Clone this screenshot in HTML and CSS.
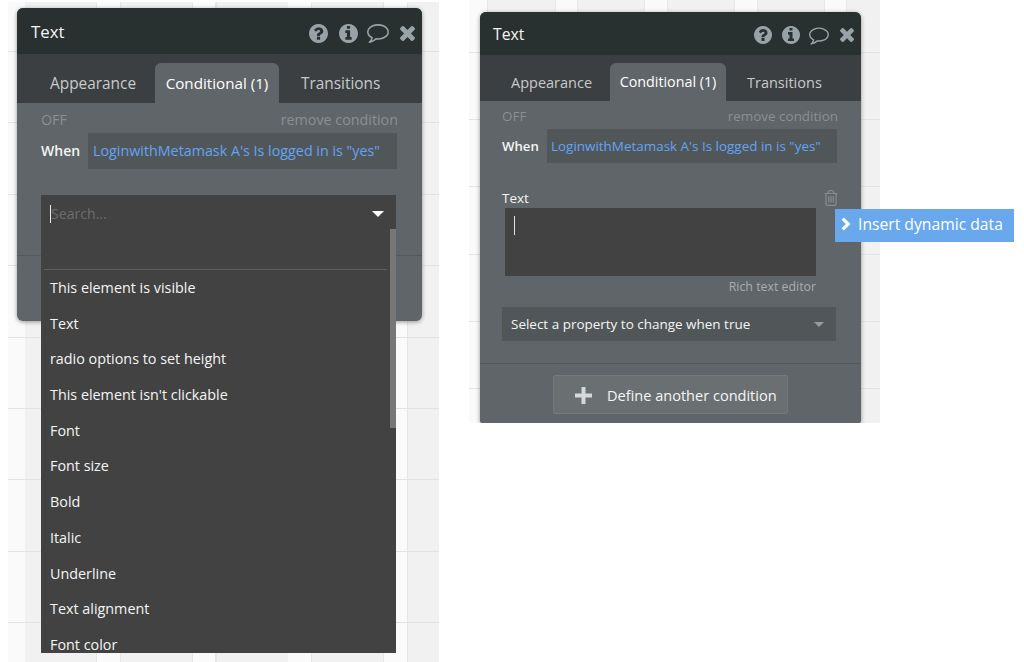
FILE: index.html
```html
<!DOCTYPE html>
<html lang="en">
<head>
<meta charset="utf-8">
<title>Text conditional properties</title>
<link rel="stylesheet" href="styles.css">
</head>
<body>
<svg class="sprite" aria-hidden="true">
  <symbol id="i-question" viewBox="128 128 1536 1536"><path d="M1024 1376v-192q0-14-9-23t-23-9h-192q-14 0-23 9t-9 23v192q0 14 9 23t23 9h192q14 0 23-9t9-23zm256-672q0-88-55.500-163t-138.500-116-170-41q-243 0-371 213-15 24 8 42l132 100q7 6 19 6 16 0 25-12 53-68 86-92 34-24 86-24 48 0 85.500 26t37.500 59q0 38-20 61t-68 45q-63 28-115.500 86.500t-52.500 125.500v36q0 14 9 23t23 9h192q14 0 23-9t9-23q0-19 21.500-49.500t54.500-49.500q32-18 49-28.500t46-35 44.500-48 28-60.500 12.500-81zm384 192q0 209-103 385.500t-279.500 279.500-385.500 103-385.500-103-279.500-279.500-103-385.500 103-385.500 279.500-279.500 385.500-103 385.500 103 279.500 279.500 103 385.500z"/></symbol>
  <symbol id="i-info" viewBox="128 128 1536 1536"><path d="M1152 1376v-160q0-14-9-23t-23-9h-96v-512q0-14-9-23t-23-9h-320q-14 0-23 9t-9 23v160q0 14 9 23t23 9h96v320h-96q-14 0-23 9t-9 23v160q0 14 9 23t23 9h448q14 0 23-9t9-23zm-128-896v-160q0-14-9-23t-23-9h-192q-14 0-23 9t-9 23v160q0 14 9 23t23 9h192q14 0 23-9t9-23zm640 416q0 209-103 385.500t-279.500 279.500-385.500 103-385.500-103-279.500-279.500-103-385.500 103-385.500 279.500-279.500 385.500-103 385.500 103 279.500 279.500 103 385.500z"/></symbol>
  <symbol id="i-comment" viewBox="0 256 1792 1536"><path d="M896 384q-204 0-381.500 69.500t-282 187.500-104.500 255q0 112 71.500 213.500t201.500 175.500l87 50-27 96q-24 91-70 172 152-63 275-171l43-38 57 6q69 8 130 8 204 0 381.500-69.500t282-187.500 104.500-255-104.500-255-282-187.500-381.500-69.500zm896 512q0 174-120 321.500t-326 233-450 85.500q-70 0-145-8-198 175-460 242-49 14-114 22h-5q-15 0-27-10.500t-16-27.500v-1q-3-4-.5-12t2-10 4.500-9.500l6-9 7-8.500 8-9q7-8 31-34.500t34.500-38 31-39.500 32.500-51 27-59 26-76q-157-89-247.500-220t-90.500-281q0-174 120-321.500t326-233 450-85.500 450 85.500 326 233 120 321.500z"/></symbol>
  <symbol id="i-close" viewBox="302 302 1188 1188"><path d="M1490 1258q0 40-28 68l-136 136q-28 28-68 28t-68-28l-294-294-294 294q-28 28-68 28t-68-28l-136-136q-28-28-28-68t28-68l294-294-294-294q-28-28-28-68t28-68l136-136q28-28 68-28t68 28l294 294 294-294q28-28 68-28t68 28l136 136q28 28 28 68t-28 68l-294 294 294 294q28 28 28 68z"/></symbol>
</svg>
<main class="page">
  <section class="canvas canvas-a">
    <div class="panel panel-a">
      <header class="head">
        <h2 class="title">Text</h2>
        <div class="tools">
          <svg class="round"><use href="#i-question"/></svg>
          <svg class="round"><use href="#i-info"/></svg>
          <svg class="comment"><use href="#i-comment"/></svg>
          <svg class="close"><use href="#i-close"/></svg>
        </div>
      </header>
      <nav class="tabs">
        <span class="tab tab-first">Appearance</span>
        <span class="tab tab-on">Conditional (1)</span>
        <span class="tab tab-last">Transitions</span>
      </nav>
      <div class="body">
        <div class="state"><span>OFF</span><span>remove condition</span></div>
        <div class="when"><b class="label">When</b><div class="expr">LoginwithMetamask A's Is logged in is "yes"</div></div>
      </div>
      <div class="foot"></div>
      <div class="menu">
        <div class="search"><span class="caret"></span><span class="hint">Search...</span><svg class="arrow" viewBox="0 0 12 6"><path d="M0 0h12L6 6z"/></svg></div>
        <div class="blank"></div>
        <ul class="options">
          <li>This element is visible</li>
          <li>Text</li>
          <li>radio options to set height</li>
          <li>This element isn't clickable</li>
          <li>Font</li>
          <li>Font size</li>
          <li>Bold</li>
          <li>Italic</li>
          <li>Underline</li>
          <li>Text alignment</li>
          <li>Font color</li>
        </ul>
        <div class="thumb"></div>
      </div>
    </div>
  </section>
  <section class="canvas canvas-b">
    <div class="panel panel-b">
      <header class="head">
        <h2 class="title">Text</h2>
        <div class="tools">
          <svg class="round"><use href="#i-question"/></svg>
          <svg class="round"><use href="#i-info"/></svg>
          <svg class="comment"><use href="#i-comment"/></svg>
          <svg class="close"><use href="#i-close"/></svg>
        </div>
      </header>
      <nav class="tabs">
        <span class="tab tab-first">Appearance</span>
        <span class="tab tab-on">Conditional (1)</span>
        <span class="tab tab-last">Transitions</span>
      </nav>
      <div class="body">
        <div class="state"><span>OFF</span><span>remove condition</span></div>
        <div class="when"><b class="label">When</b><div class="expr">LoginwithMetamask A's Is logged in is "yes"</div></div>
        <div class="prop">
          <span class="prop-name">Text</span>
          <svg class="trash" viewBox="0 0 14 16"><path d="M.5 3.500h13M4 3.500c0-3 1.500-3 3-3s3 0 3 3M2 3.500v10.500q0 1.300 1.300 1.300h7.400q1.300 0 1.300-1.300V3.500M4.700 6v6.500M7 6v6.500M9.300 6v6.500"/></svg>
        </div>
        <div class="editor"><span class="caret"></span></div>
        <div class="rich">Rich text editor</div>
        <div class="select"><span>Select a property to change when true</span><svg class="arrow" viewBox="0 0 12 6"><path d="M0 0h12L6 6z"/></svg></div>
      </div>
      <div class="foot">
        <div class="define"><svg class="plus" viewBox="0 0 17 17"><path d="M8.500 0v17M0 8.500h17"/></svg><span>Define another condition</span></div>
      </div>
      <div class="insert"><svg class="chevron" viewBox="0 0 10 14"><path d="M1.700 1.700L7.200 7l-5.500 5.300"/></svg><span>Insert dynamic data</span></div>
    </div>
  </section>
</main>
</body>
</html>
```
FILE: styles.css
```css
* { box-sizing: border-box; }
body { margin: 0; background: #fff; font-family: "Open Sans", "Noto Sans", sans-serif; overflow: hidden; }
.sprite { display: none; }
.page { display: flex; align-items: flex-start; gap: 30px; width: 1024px; height: 662px; padding-left: 8px; white-space: nowrap; }
.canvas { flex: none; background-color: #f1f1f1; }
.canvas-a {
  width: 431px; height: 660px; margin-top: 2px; padding: 6px 0 0 9px;
  background-image:
    repeating-linear-gradient(to bottom, transparent 0 49px, #e2e2e2 49px 50px, transparent 50px 71.400px),
    repeating-linear-gradient(to right, #fafafa 0 22.500px, #e6e6e6 22.500px 23.500px, #f1f1f1 23.500px 94.500px, #e6e6e6 94.500px 95.500px);
  background-position: 0 0, -6px 0;
  background-size: auto, 437px 100%;
}
.canvas-b {
  width: 411px; height: 423px; padding: 12px 0 0 11px;
  background-image:
    repeating-linear-gradient(to bottom, transparent 0 52px, #e4e4e4 52px 53px, transparent 53px 67.200px),
    repeating-linear-gradient(to right, #fafafa 0 21.500px, #e8e8e8 21.500px 22.500px, #f1f1f1 22.500px 88.700px, #e8e8e8 88.700px 89.700px);
  background-position: 0 0, -3px 0;
  background-size: auto, 414px 100%;
}
.panel { position: relative; display: flex; flex-direction: column; color: #f4f5f5; background: #5f6568; box-shadow: 0 1px 4px rgba(0,0,0,.4); }
.panel-a { width: 405px; height: 313px; border-radius: 6px; }
.panel-b { width: 381px; height: 411px; border-radius: 6px 6px 2px 2px; clip-path: inset(-6px -160px 0 -6px); }
.head { display: flex; justify-content: space-between; align-items: center; background: #293030; border-radius: 6px 6px 0 0; }
.panel-a .head { height: 46px; padding: 0 7px 0 14px; }
.panel-b .head { height: 43px; padding: 0 7px 0 13px; }
.title { margin: 0; font-weight: 400; }
.panel-a .title { font-size: 16.800px; line-height: 46px; padding-top: 1px; }
.panel-b .title { font-size: 15.800px; line-height: 43px; padding-top: 2px; }
.tools { display: flex; align-items: center; fill: #98a3a7; }
.panel-a .tools { padding-top: 4px; }
.panel-b .tools { padding-top: 3px; }
.panel-a .round { width: 19px; height: 19px; margin-right: 11px; }
.panel-a .comment { width: 22px; height: 19px; margin: 0 11px 0 -2px; }
.panel-a .close { width: 15px; height: 15px; }
.panel-b .round { width: 18px; height: 18px; margin-right: 10px; }
.panel-b .comment { width: 20px; height: 18px; margin: 1px 11px 0 -1px; }
.panel-b .close { width: 14px; height: 14px; }
.tabs { display: flex; align-items: flex-end; background: #3b3f41; color: #c8cacb; }
.tab { display: block; }
.tab-on { background: #5f6568; color: #fff; font-weight: 500; border-radius: 6px 6px 0 0; text-align: center; }
.panel-a .tabs { height: 49px; font-size: 15.400px; line-height: 40px; }
.panel-a .tab-first { width: 138px; padding-left: 33px; line-height: 38px; }
.panel-a .tab-on { width: 124px; font-size: 15.200px; }
.panel-a .tab-last { padding-left: 22px; line-height: 38px; }
.panel-b .tabs { height: 46px; font-size: 14.500px; line-height: 38px; }
.panel-b .tab-first { width: 130px; padding-left: 31px; line-height: 37px; }
.panel-b .tab-on { width: 116px; font-size: 14.300px; }
.panel-b .tab-last { padding-left: 21px; line-height: 37px; }
.body { flex: 1; }
.panel-a .body { padding: 2px 24px 0; }
.panel-b .body { padding: 1px 23px 0 22px; }
.state { display: flex; justify-content: space-between; color: #8b9092; }
.panel-a .state { height: 28px; font-size: 14.300px; line-height: 30px; }
.panel-b .state { height: 27px; font-size: 13.450px; line-height: 29px; }
.when { display: flex; }
.label { font-weight: 600; }
.expr { flex: 1; background: #515759; color: #62a4f5; }
.panel-a .when { font-size: 14.300px; line-height: 35px; }
.panel-a .label { width: 47px; font-size: 14px; }
.panel-a .expr { height: 36px; margin-right: 1px; padding-left: 5px; }
.panel-b .when { font-size: 13.450px; line-height: 34px; }
.panel-b .label { width: 45px; font-size: 13.200px; }
.panel-b .expr { height: 34px; margin-right: 1px; padding-left: 4px; }
.foot { border-top: 1px solid #55595c; }
.panel-a .foot { height: 66px; }
.panel-b .foot { height: 60px; padding: 11px 0 0 73px; }
.menu { position: absolute; left: 24px; top: 187px; width: 355px; height: 458px; background: #424242; font-size: 14.350px; overflow: hidden; }
.search { display: flex; align-items: center; height: 38px; padding: 0 12px 0 9px; color: #6d6d6d; }
.search .caret { width: 1px; height: 18px; background: #eee; }
.hint { flex: 1; padding-bottom: 1px; font-size: 14.100px; }
.arrow { width: 12px; height: 6px; fill: #fff; }
.blank { height: 37px; margin: 0 9px 0 3px; border-bottom: 1px solid #5e5e5e; }
.options { margin: 0; padding: 0 0 0 9px; list-style: none; }
.options li { height: 35.700px; line-height: 35px; }
.thumb { position: absolute; right: 0; top: 34px; width: 6px; height: 199px; background: #777; }
.prop { display: flex; justify-content: space-between; align-items: center; height: 18px; margin-top: 26px; font-size: 13.500px; }
.prop-name { font-weight: 500; }
.trash { width: 14px; height: 16px; fill: none; stroke: #878c8e; stroke-width: 1.200; }
.editor { width: 311px; height: 68px; margin: 1px 0 0 3px; padding: 8px 9px; background: #424242; }
.editor .caret { display: block; width: 1px; height: 19px; background: #e0e0e0; }
.rich { width: 314px; height: 31px; line-height: 21px; text-align: right; font-size: 12.350px; color: #a9adae; }
.select { display: flex; justify-content: space-between; align-items: center; width: 334px; height: 34px; padding: 0 12px 0 9px; background: #515759; font-size: 13.480px; line-height: 35px; }
.select .arrow { width: 10px; height: 5px; fill: #969b9d; }
.define { display: flex; align-items: center; width: 235px; height: 39px; padding: 1px 0 0 21px; gap: 15px; background: #6a7072; border: 1px solid #747a7c; font-size: 14.550px; border-radius: 2px; }
.plus { width: 17px; height: 17px; stroke: #d5d7d8; stroke-width: 4; }
.insert { position: absolute; left: 355px; top: 197px; display: flex; align-items: center; width: 179px; height: 33px; padding: 0 0 3px 6px; gap: 7px; background: #69a8ec; color: #fff; font-size: 15.700px; }
.chevron { width: 10px; height: 14px; fill: none; stroke: #fff; stroke-width: 3.200; }
```
